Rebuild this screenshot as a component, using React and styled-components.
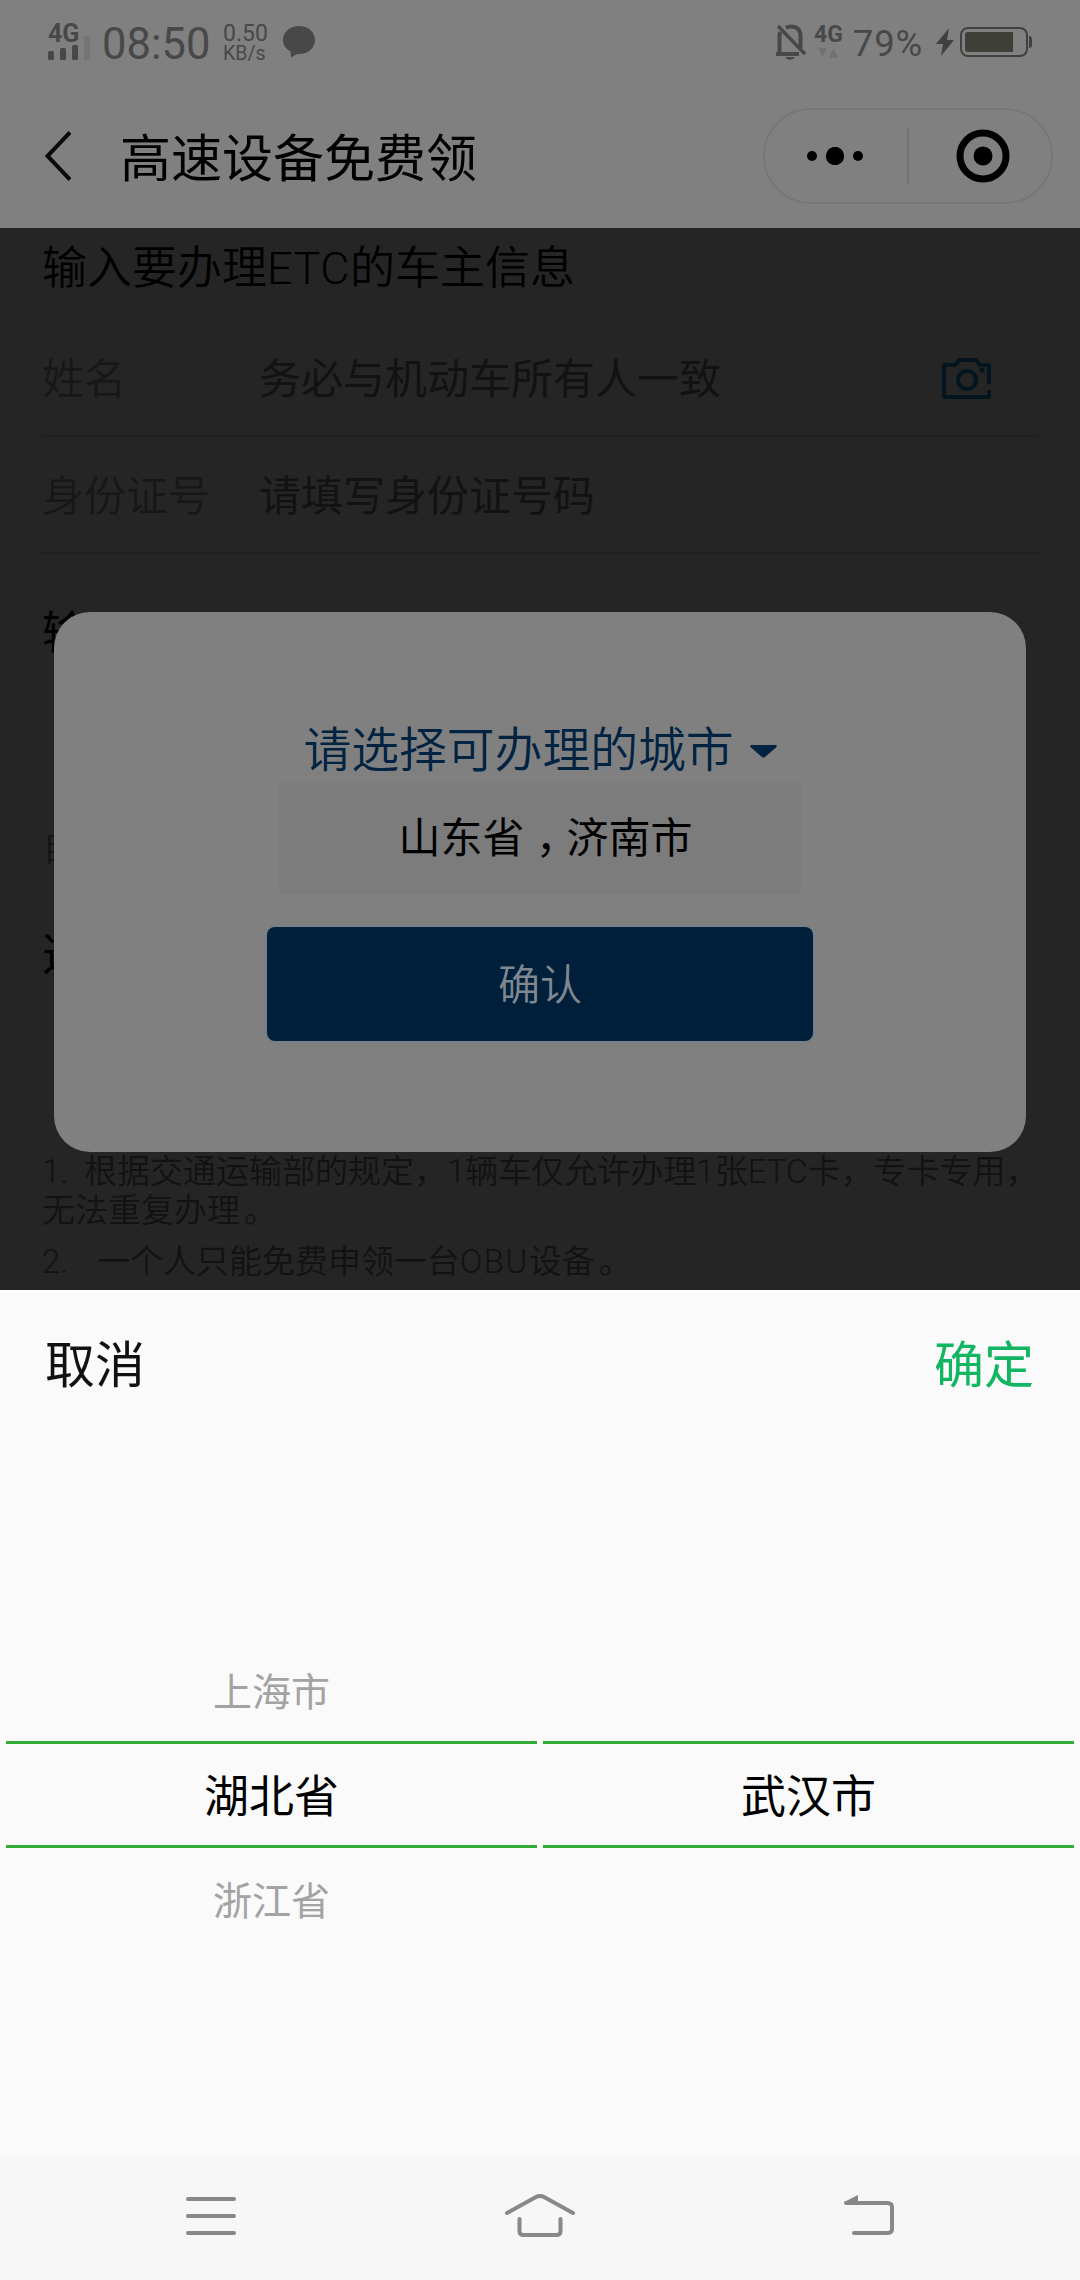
import React from "react";
import styled, { createGlobalStyle } from "styled-components";

const PROVINCES = ["上海市", "湖北省", "浙江省"];
const CITIES = ["武汉市"];

const StatusBar = () => (
  <Status>
    <Signal>
      <Network size={25}>4G</Network>
      <svg width="44" height="24" viewBox="0 0 44 24">
        <g fill="#484848">
          <rect x="0" y="15" width="6" height="9" rx="1.5" />
          <rect x="12" y="12" width="6" height="12" rx="1.5" />
          <rect x="24" y="9" width="6" height="15" rx="1.5" />
        </g>
        <rect x="36" y="0" width="6" height="24" rx="1.5" fill="#747474" />
      </svg>
    </Signal>
    <Clock>08:50</Clock>
    <Speed>
      <SpeedValue>0.50</SpeedValue>
      <SpeedUnit>KB/s</SpeedUnit>
    </Speed>
    <svg width="32" height="32" viewBox="0 0 32 32" fill="#484848">
      <path d="M16 0C7 0 0 6 0 14c0 5 3 9 7.500 11.500L8 31.500 14 28h2c9 0 16-6 16-14S25 0 16 0z" />
    </svg>
    <StatusRight>
      <svg width="30" height="36" viewBox="0 0 30 36" fill="none" stroke="#484848" strokeWidth="4">
        <path d="M3.500 30V12q0-2 .8-4M10 4q2.500-1.500 5-1.500 9.500 0 9.500 10V24M0 30h23" />
        <path d="M2 2l27 28" strokeWidth="3.500" />
        <path d="M9 33h10q-2 3-5 3t-5-3z" fill="#484848" stroke="none" />
      </svg>
      <DataNetwork>
        <Network size={23}>4G</Network>
        <svg width="20" height="10" viewBox="0 0 20 10" fill="#717171">
          <path d="M0 0h9L4.500 9zM15.500 0L20 10h-9z" />
        </svg>
      </DataNetwork>
      <Percent>79%</Percent>
      <Bolt width="18" height="28" viewBox="0 0 18 28" fill="#404040">
        <path d="M13 0L0 16h7L5 28 18 12h-7z" />
      </Bolt>
      <svg width="72" height="30" viewBox="0 0 72 30">
        <rect x="1" y="1" width="66" height="28" rx="7" fill="none" stroke="#404040" strokeWidth="2" />
        <path d="M8 5h45v20H8q-3 0-3-3V8q0-3 3-3z" fill="#3e3f39" />
        <path d="M69 9q3 0 3 3v6q0 3-3 3z" fill="#404040" />
      </svg>
    </StatusRight>
  </Status>
);

const TitleBar = () => (
  <Header>
    <svg width="26" height="50" viewBox="0 0 26 50" fill="none" stroke="#0a0a0a" strokeWidth="4">
      <path d="M25 1.500L2.500 25 25 48.500" />
    </svg>
    <Title>高速设备免费领</Title>
    <Capsule>
      <MoreButton>
        <svg width="58" height="18" viewBox="0 0 58 18">
          <circle cx="6" cy="9" r="5" />
          <circle cx="29" cy="9" r="9.200" />
          <circle cx="52" cy="9" r="5" />
        </svg>
      </MoreButton>
      <CapsuleDivider />
      <CloseButton>
        <svg width="54" height="54" viewBox="0 0 54 54">
          <circle cx="27" cy="27" r="23" fill="none" stroke="#000" strokeWidth="7" />
          <circle cx="27" cy="27" r="9.500" />
        </svg>
      </CloseButton>
    </Capsule>
  </Header>
);

const CityDialog = () => (
  <Dialog>
    <DialogTitle>
      <span>请选择可办理的城市</span>
      <Caret width="27" height="13" viewBox="0 0 27 13" fill="#002342">
        <path d="M1 0h25q1.500 1 0 2.500L15 12q-1.500 1-3 0L1 2.500Q-.5 1 1 0z" />
      </Caret>
    </DialogTitle>
    <CityValue>
      山东省<Mark indent={0.27}>，</Mark>济南市
    </CityValue>
    <ConfirmButton>确认</ConfirmButton>
  </Dialog>
);

const PickerColumn = ({ items, selected }) => (
  <Column>
    <PickerItem lineHeight={105}>{items[selected - 1]}</PickerItem>
    <PickerItem lineHeight={100} active>
      {items[selected]}
    </PickerItem>
    <PickerItem lineHeight={100}>{items[selected + 1]}</PickerItem>
  </Column>
);

const App = () => {
  return (
    <>
      <GlobalStyle />
      <Phone>
        <StatusBar />
        <TitleBar />
        <Page>
          <SectionTitle>
            输入要办理<Latin spacing={0.5}>ETC</Latin>的车主信息
          </SectionTitle>
          <FormRow>
            <Label>姓名</Label>
            <Placeholder>务必与机动车所有人一致</Placeholder>
            <Camera width="50" height="42" viewBox="0 0 50 42" fill="none" stroke="#04151f" strokeWidth="4">
              <path d="M47 26V7H38l-4-5H17l-4 5H2v32h45v-7" strokeLinejoin="round" />
              <circle cx="25" cy="22" r="9" />
              <circle cx="40" cy="12" r="2.500" fill="#04151f" stroke="none" />
            </Camera>
          </FormRow>
          <FormRow>
            <Label>身份证号</Label>
            <Placeholder>请填写身份证号码</Placeholder>
          </FormRow>
          <HiddenTitle>输</HiddenTitle>
          <HiddenHint>目</HiddenHint>
          <HiddenTitle>选</HiddenTitle>
          <Notes>
            <Note>
              <Index width={42}>1.</Index>根据交通运输部的规定，<Latin>1</Latin>辆车仅允许办理<Latin>1</Latin>张
              <Latin>ETC</Latin>卡，专卡专用，
              <br />
              无法重复办理<Mark indent={0.12}>。</Mark>
            </Note>
            <Note>
              <Index width={55}>2.</Index>一个人只能免费申领一台<Latin spacing={1.5}>OBU</Latin>设备
              <Mark indent={0.12}>。</Mark>
            </Note>
          </Notes>
          <CityDialog />
        </Page>
        <Sheet>
          <SheetActions>
            <SheetButton>取消</SheetButton>
            <SheetButton primary>确定</SheetButton>
          </SheetActions>
          <Picker>
            <PickerColumn items={PROVINCES} selected={1} />
            <PickerColumn items={CITIES} selected={0} />
          </Picker>
        </Sheet>
        <SystemNav>
          <svg width="50" height="44" viewBox="0 0 50 44" stroke="#888" strokeWidth="4" strokeLinecap="round">
            <path d="M2 5h46M2 22h46M2 39h46" />
          </svg>
          <svg width="70" height="44" viewBox="0 0 70 44" fill="none" stroke="#888" strokeWidth="4" strokeLinecap="round">
            <path d="M2 19L31 3q4-2 8 0l29 16M14.500 25v12q0 4 4 4h33q4 0 4-4V25" />
          </svg>
          <svg width="52" height="44" viewBox="0 0 52 44" fill="none" stroke="#888" strokeWidth="4" strokeLinecap="round">
            <path d="M3 9h41q5 0 5 4v22q0 4-5 4H11" />
            <path d="M1 8L15 1v9H2z" fill="#888" stroke="none" />
          </svg>
        </SystemNav>
      </Phone>
    </>
  );
};
export default App;

const GlobalStyle = createGlobalStyle`
  * {
    box-sizing: border-box;
  }
  body {
    margin: 0;
    font-family: "Noto Sans CJK SC", sans-serif;
    color: #000;
  }
  svg {
    display: block;
    flex: none;
  }
`;

const Phone = styled.div`
  display: flex;
  flex-direction: column;
  width: 1080px;
  height: 2280px;
  overflow: hidden;
  background-color: #808080;
`;

const Status = styled.div`
  display: flex;
  align-items: center;
  height: 84px;
  padding: 0 48px 0 48px;
  font-family: Roboto, sans-serif;
  color: #484848;
`;
const Signal = styled.div`
  display: flex;
  flex-direction: column;
  width: 54px;
  svg {
    margin-top: -8px;
  }
`;
const Network = styled.span`
  font-size: ${(props) => props.size}px;
  line-height: ${(props) => props.size - 5}px;
  font-weight: bold;
`;
const Clock = styled.span`
  width: 121px;
  padding-top: 5px;
  font-size: 43.5px;
`;
const Speed = styled.div`
  display: flex;
  flex-direction: column;
  width: 60px;
  padding-top: 3px;
`;
const SpeedValue = styled.span`
  font-size: 23px;
  line-height: 20px;
`;
const SpeedUnit = styled.span`
  font-size: 19.5px;
  line-height: 20px;
`;
const StatusRight = styled.div`
  display: flex;
  align-items: center;
  margin-left: auto;
`;
const DataNetwork = styled.div`
  display: flex;
  flex-direction: column;
  align-items: center;
  gap: 4px;
  margin-left: 8px;
`;
const Percent = styled.span`
  margin: 3px 0 0 10px;
  font-size: 36.5px;
  letter-spacing: 0.8px;
`;
const Bolt = styled.svg`
  margin: 0 6px 0 13px;
`;

const Header = styled.div`
  display: flex;
  align-items: center;
  height: 144px;
  padding: 0 27px 0 45px;
`;
const Title = styled.h1`
  margin: 0 0 2px 49px;
  font-size: 51px;
  line-height: 60px;
  font-weight: 400;
`;
const Capsule = styled.div`
  display: flex;
  align-items: center;
  width: 290px;
  height: 96px;
  margin-left: auto;
  border: 2px solid #777;
  border-radius: 48px;
`;
const MoreButton = styled.div`
  width: 142px;
  padding-left: 41px;
`;
const CloseButton = styled.div`
  padding-left: 47px;
`;
const CapsuleDivider = styled.div`
  width: 2px;
  height: 57px;
  background-color: #737373;
`;

const Page = styled.div`
  position: relative;
  height: 1062px;
  padding: 7px 42px 0;
  overflow: hidden;
  background-color: #252525;
`;
const SectionTitle = styled.div`
  height: 85px;
  font-size: 45px;
  font-weight: 350;
  line-height: 60px;
`;
const Latin = styled.span`
  font-family: Roboto, sans-serif;
  font-size: 1em;
  font-weight: 300;
  line-height: 1;
  letter-spacing: ${(props) => props.spacing || 0}px;
`;
const FormRow = styled.div`
  display: flex;
  align-items: center;
  height: 117px;
  padding: 0 46px 3px 0;
  border-bottom: 2px solid #202020;
  font-size: 42px;
  line-height: 50px;
`;
const Label = styled.span`
  width: 217px;
  font-weight: 350;
  color: #171717;
`;
const Placeholder = styled.span`
  color: #121212;
`;
const Camera = styled.svg`
  margin: 6px 0 0 auto;
`;
const HiddenTitle = styled.div`
  height: 60px;
  margin-top: 46px;
  font-size: 45px;
  line-height: 60px;
`;
const HiddenHint = styled.div`
  height: 40px;
  margin: 167px 0 0;
  padding-left: 1px;
  font-size: 33px;
  font-weight: 350;
  line-height: 40px;
  color: #141414;

  & + ${HiddenTitle} {
    margin-top: 55px;
  }
`;
const Notes = styled.div`
  margin-top: 168px;
  margin-right: -42px;
  color: #121212;
`;
const Note = styled.div`
  margin-bottom: 12px;
  font-size: 33px;
  font-weight: 350;
  line-height: 39px;
  white-space: nowrap;
`;
const Index = styled.span`
  display: inline-block;
  width: ${(props) => props.width}px;
  font-family: Roboto, sans-serif;
  font-weight: 300;
  line-height: 1;
`;
/* full-width punctuation, pushed towards the middle of its cell */
const Mark = styled.span`
  display: inline-block;
  width: 1em;
  line-height: 1;
  text-indent: ${(props) => props.indent}em;
`;

const Dialog = styled.div`
  position: absolute;
  top: 384px;
  left: 54px;
  display: flex;
  flex-direction: column;
  align-items: center;
  width: 972px;
  height: 540px;
  padding-top: 102px;
  border-radius: 36px;
  background-color: #808080;
`;
const DialogTitle = styled.div`
  display: flex;
  align-items: center;
  gap: 16px;
  height: 69px;
  padding-bottom: 3px;
  font-size: 47.8px;
  font-weight: 350;
  line-height: 60px;
  color: #002342;
`;
const Caret = styled.svg`
  margin-top: 9px;
`;
const CityValue = styled.div`
  width: 522px;
  height: 111px;
  padding-left: 11px;
  background-color: #7c7c7c;
  font-size: 42px;
  line-height: 103px;
  text-align: center;
`;
const ConfirmButton = styled.div`
  width: 546px;
  height: 114px;
  margin-top: 33px;
  border-radius: 8px;
  background-color: #001f3b;
  box-shadow: 0 0 0 2px #76808a;
  font-size: 42px;
  font-weight: 350;
  line-height: 110px;
  text-align: center;
  color: #7f8890;
`;

const Sheet = styled.div`
  height: 865px;
  border-top: 2px solid #fff;
  background-color: #fafafa;
`;
const SheetActions = styled.div`
  display: flex;
  justify-content: space-between;
  height: 345px;
  padding: 39px 46px 0 45px;
`;
const SheetButton = styled.span`
  font-size: 50px;
  line-height: 60px;
  color: ${(props) => (props.primary ? "#12b562" : "#111")};
`;
const Picker = styled.div`
  display: flex;
  gap: 6px;
  padding: 0 6px;
`;
const Column = styled.div`
  flex: 1;
`;
const PickerItem = styled.div`
  height: ${(props) => (props.active ? 107 : 104)}px;
  border: solid #33ac37;
  border-width: ${(props) => (props.active ? "3px 0" : "0")};
  font-size: ${(props) => (props.active ? 45 : 39)}px;
  line-height: ${(props) => props.lineHeight}px;
  text-align: center;
  color: ${(props) => (props.active ? "#000" : "#a3a3a3")};
`;

const SystemNav = styled.div`
  display: flex;
  align-items: center;
  justify-content: space-between;
  height: 125px;
  padding: 0 185px 3px 186px;
  background-color: #f7f7f7;
`;
